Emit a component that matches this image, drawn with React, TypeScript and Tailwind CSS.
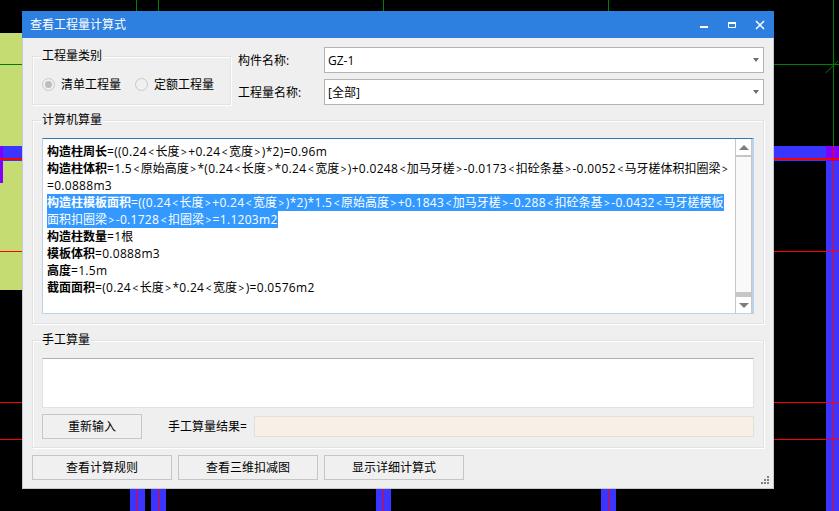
const Caret = () => (
  <svg width="6" height="4" viewBox="0 0 6 4" className="shrink-0">
    <path d="M0 0H6L3 4Z" fill="#6e6e6e" />
  </svg>
);

const Bars = () => (
  <>
    {/* CAD drawing behind the window */}
    <div className="absolute left-0 top-[33px] w-[22px] h-[257px] bg-[#c5dc72]" />
    <div className="absolute left-0 top-[64px] w-[22px] h-px bg-[#008000]" />
    <div className="absolute left-[774px] top-[64px] w-[65px] h-px bg-[#008000]" />
    <div className="absolute left-[136px] top-0 w-px h-[11px] bg-[#008000]" />
    <div className="absolute left-[158px] top-0 w-px h-[11px] bg-[#008000]" />
    <div className="absolute left-[383px] top-0 w-px h-[11px] bg-[#008000]" />
    <div className="absolute left-[608px] top-0 w-px h-[11px] bg-[#008000]" />
    <div className="absolute left-[833px] top-0 w-px h-[146px] bg-[#008000]" />
    <svg className="absolute left-[825px] top-[58px]" width="14" height="16" viewBox="0 0 14 16">
      <path d="M0.5 15L13 3" stroke="#008000" strokeWidth="1" fill="none" />
    </svg>
    <div className="absolute left-0 top-[146px] w-[22px] h-[15px] bg-[#3a36ff]" />
    <div className="absolute left-0 top-[146px] w-[3px] h-[37px] bg-[#8000ff]" />
    <div className="absolute left-0 top-[158px] w-[22px] h-[2px] bg-[#ff0000]" />
    <div className="absolute left-[774px] top-[146px] w-[65px] h-[15px] bg-[#3a36ff]" />
    <div className="absolute left-[826px] top-[146px] w-[13px] h-[365px] bg-[#3a36ff]" />
    <div className="absolute left-[826px] top-[146px] w-[13px] h-[15px] bg-[#8000ff]" />
    <div className="absolute left-[774px] top-[158px] w-[65px] h-[2px] bg-[#ff0000]" />
    <div className="absolute left-[833px] top-[146px] w-px h-[365px] bg-[#ff0000]" />
    <div className="absolute left-0 top-[251px] w-[22px] h-px bg-[#ff0000]" />
    <div className="absolute left-[774px] top-[251px] w-[65px] h-px bg-[#ff0000]" />
    <div className="absolute left-0 top-[402px] w-[22px] h-px bg-[#ff0000]" />
    <div className="absolute left-[774px] top-[402px] w-[65px] h-px bg-[#ff0000]" />
    <div className="absolute left-0 top-[439px] w-[22px] h-px bg-[#ff0000]" />
    <div className="absolute left-[774px] top-[439px] w-[65px] h-px bg-[#ff0000]" />
    <div className="absolute left-[130px] top-[489px] w-[15px] h-[22px] bg-[#3a36ff]" />
    <div className="absolute left-[151px] top-[489px] w-[15px] h-[22px] bg-[#3a36ff]" />
    <div className="absolute left-[376px] top-[489px] w-[15px] h-[22px] bg-[#3a36ff]" />
    <div className="absolute left-[601px] top-[489px] w-[15px] h-[22px] bg-[#3a36ff]" />
    <div className="absolute left-[136px] top-[489px] w-px h-[22px] bg-[#ff0000]" />
    <div className="absolute left-[158px] top-[489px] w-px h-[22px] bg-[#ff0000]" />
    <div className="absolute left-[383px] top-[489px] w-px h-[22px] bg-[#ff0000]" />
    <div className="absolute left-[608px] top-[489px] w-px h-[22px] bg-[#ff0000]" />
  </>
);

const Group = ({ title, className, children }: { title: string; className: string; children?: React.ReactNode }) => (
  <div className={`relative border border-[#e2e2e2] shadow-[inset_1px_1px_0_#ffffff,1px_1px_0_#ffffff] ${className}`}>
    <span className="absolute left-[8px] top-[-10px] px-px bg-[#efefef] leading-[17px]">{title}</span>
    {children}
  </div>
);

const Combo = ({ value }: { value: string }) => (
  <div className="flex-1 h-[26px] bg-white border border-[#b4b4b4] flex items-center justify-between pl-[3px] pr-[4px]">
    <span className="pt-[2px]">{value}</span>
    <Caret />
  </div>
);

const Radio = ({ checked, label }: { checked?: boolean; label: string }) => (
  <div className="flex items-center gap-[6px]">
    <div className="w-[13px] h-[13px] rounded-full border border-[#c8c8c8] bg-[#f0f0f0] flex items-center justify-center">
      {checked && <div className="w-[7px] h-[7px] rounded-full bg-[#bdbdbd]" />}
    </div>
    <span>{label}</span>
  </div>
);

const Btn = ({ label, className }: { label: string; className: string }) => (
  <div className={`h-[25px] border border-[#c6c6c6] bg-[#f0f0f0] flex items-center justify-center ${className}`}>{label}</div>
);

/* Latin runs are slightly wider in the reference, and its angle brackets are small with air round them. */
const Rich = ({ t }: { t: string }) => (
  <>
    {t.split(/([<>]|[\u4e00-\u9fff]+)/).filter(Boolean).map((p, i) =>
      p === "<" || p === ">" ? (
        <span key={i} className="text-[10px] px-[1.5px]">{p}</span>
      ) : /[\u4e00-\u9fff]/.test(p) ? (
        <span key={i}>{p}</span>
      ) : (
        <span key={i} className="tracking-[0.3px]">{p}</span>
      )
    )}
  </>
);

const L = ({ b, t }: { b?: string; t: string }) => (
  <div className="h-[17px] leading-[17px] whitespace-nowrap">
    {b && <span className="font-bold">{b}</span>}
    <Rich t={t} />
  </div>
);

const S = ({ b, t, w }: { b?: string; t: string; w: string }) => (
  <div className={`h-[17px] leading-[17px] whitespace-nowrap bg-[#3399ff] text-white ${w}`}>
    {b && <span className="font-bold">{b}</span>}
    <Rich t={t} />
  </div>
);

export default function App() {
  return (
    <div className="relative w-[839px] h-[511px] overflow-hidden bg-black text-[12px] text-black font-['Open_Sans','Noto_Sans_CJK_SC',sans-serif]">
      <Bars />
      <div className="absolute left-[22px] top-[11px] w-[752px] h-[478px] flex flex-col bg-[#efefef] border-x border-b border-[#c3cad6]">
        <div className="h-[27px] -mx-px shrink-0 bg-[#2d7fe0] flex items-center justify-between pl-[8px] text-white">
          <span>查看工程量计算式</span>
          <div className="flex items-center">
            <svg width="28" height="27" viewBox="0 0 28 27">
              <rect x="10" y="15" width="8" height="2" fill="#fff" />
            </svg>
            <svg width="28" height="27" viewBox="0 0 28 27">
              <path d="M10.5 11.5H17.5V16.5H10.5Z" stroke="#fff" strokeWidth="1" fill="none" />
              <rect x="10" y="11" width="8" height="2" fill="#fff" />
            </svg>
            <svg width="28" height="27" viewBox="0 0 28 27">
              <path d="M10 10L18 18M18 10L10 18" stroke="#fff" strokeWidth="1.5" fill="none" />
            </svg>
          </div>
        </div>

        <div className="flex-1 flex flex-col px-[9px]">
          <div className="flex items-start pt-[9px]">
            <Group title="工程量类别" className="w-[199px] h-[49px] mt-[9px] flex items-center gap-[14px] pl-[9px] pt-[8px]">
              <Radio checked label="清单工程量" />
              <Radio label="定额工程量" />
            </Group>
            <div className="flex-1 flex flex-col gap-[6px] pl-[7px]">
              <div className="flex items-center">
                <span className="w-[86px] pt-[2px]">构件名称:</span>
                <Combo value="GZ-1" />
              </div>
              <div className="flex items-center">
                <span className="w-[86px] pt-[2px]">工程量名称:</span>
                <Combo value="[全部]" />
              </div>
            </div>
          </div>

          <Group title="计算机算量" className="mt-[15px] h-[204px] pt-[17px] px-[9px] pb-[9px]">
            <div className="flex h-full bg-white border border-[#bcd2e6] border-t-[#3278b4] border-r-2">
              <div className="flex-1 pl-[4px] pt-[4px] min-w-0">
                <L b="构造柱周长" t="=((0.24<长度>+0.24<宽度>)*2)=0.96m" />
                <L b="构造柱体积" t="=1.5<原始高度>*(0.24<长度>*0.24<宽度>)+0.0248<加马牙槎>-0.0173<扣砼条基>-0.0052<马牙槎体积扣圈梁>" />
                <L t="=0.0888m3" />
                <S w="w-[677px]" b="构造柱模板面积" t="=((0.24<长度>+0.24<宽度>)*2)*1.5<原始高度>+0.1843<加马牙槎>-0.288<扣砼条基>-0.0432<马牙槎模板" />
                <S w="w-[231px]" t="面积扣圈梁>-0.1728<扣圈梁>=1.1203m2" />
                <L b="构造柱数量" t="=1根" />
                <L b="模板体积" t="=0.0888m3" />
                <L b="高度" t="=1.5m" />
                <L b="截面面积" t="=(0.24<长度>*0.24<宽度>)=0.0576m2" />
              </div>
              <div className="w-[17px] shrink-0 flex flex-col bg-[#c6c6c6]">
                <div className="h-[16px] bg-white border-x border-[#c6c6c6] flex items-center justify-center">
                  <svg width="10" height="5" viewBox="0 0 10 5"><path d="M5 0L10 5H0Z" fill="#7d7d7d" /></svg>
                </div>
                <div className="flex-1 mt-[2px] mb-[5px] bg-[#f9f9f9] border-x border-[#c6c6c6]" />
                <div className="h-[16px] bg-white border-x border-[#c6c6c6] flex items-center justify-center">
                  <svg width="10" height="5" viewBox="0 0 10 5"><path d="M0 0H10L5 5Z" fill="#7d7d7d" /></svg>
                </div>
              </div>
            </div>
          </Group>

          <Group title="手工算量" className="mt-[16px] h-[108px] pt-[17px] px-[9px]">
            <div className="h-[50px] bg-white border border-[#dde3ec] border-t-[#b0b0b0]" />
            <div className="mt-[6px] flex items-center">
              <Btn label="重新输入" className="w-[100px]" />
              <span className="ml-[26px] w-[86px]">手工算量结果=</span>
              <div className="flex-1 h-[21px] bg-[#f8f0e7] border border-[#e2dfdb]" />
            </div>
          </Group>

          <div className="mt-[7px] flex gap-[6px]">
            <Btn label="查看计算规则" className="w-[140px]" />
            <Btn label="查看三维扣减图" className="w-[140px]" />
            <Btn label="显示详细计算式" className="w-[140px]" />
          </div>
        </div>

        <svg className="absolute right-[3px] bottom-[3px]" width="9" height="9" viewBox="0 0 9 9">
          <path d="M6 0h2v2H6zM3 3h2v2H3zM6 3h2v2H6zM0 6h2v2H0zM3 6h2v2H3zM6 6h2v2H6z" fill="#808080" />
        </svg>
      </div>
    </div>
  );
}
